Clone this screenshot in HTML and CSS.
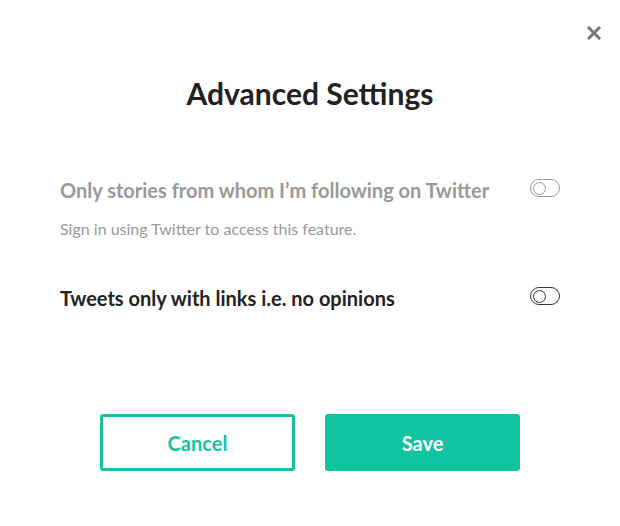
FILE: index.html
```html
<!DOCTYPE html>
<html lang="en">
<head>
  <meta charset="UTF-8">
  <meta name="viewport" content="width=device-width, initial-scale=1.0">
  <title>Advanced Settings</title>
  <link rel="stylesheet" href="styles.css">
</head>
<body>

  <div class="modal">
    <button class="close-btn" aria-label="Close">
      <svg width="14" height="14" viewBox="0 0 14 14">
        <path d="M2 2 L12 12 M12 2 L2 12" stroke="#777" stroke-width="3" stroke-linecap="square"/>
      </svg>
    </button>

    <h1>Advanced Settings</h1>

    <!-- Setting rows -->
    <div class="setting disabled">
      <div class="setting-text">
        <div class="setting-title">Only stories from whom I’m following on Twitter</div>
        <div class="setting-note">Sign in using Twitter to access this feature.</div>
      </div>
      <span class="toggle"><span class="knob"></span></span>
    </div>

    <div class="setting">
      <div class="setting-text">
        <div class="setting-title">Tweets only with links i.e. no opinions</div>
      </div>
      <span class="toggle"><span class="knob"></span></span>
    </div>

    <!-- Actions -->
    <div class="actions">
      <button class="btn btn-outline">Cancel</button>
      <button class="btn btn-primary">Save</button>
    </div>
  </div>

</body>
</html>
```

FILE: styles.css
```css
body {
  font-family: Lato, "Open Sans", sans-serif;
  background-color: white;
  margin: 0;
}

.modal {
  position: relative;
  width: 620px;
  height: 526px;
  box-sizing: border-box;
  padding: 75px 60px 0 60px;
}

.close-btn {
  position: absolute;
  top: 26px;
  right: 19px;
  background: none;
  border: none;
  padding: 0;
  cursor: pointer;
  line-height: 0;
}

h1 {
  margin: 0 0 67px 0;
  font-size: 30px;
  font-weight: 700;
  color: #222;
  text-align: center;
  line-height: 36px;
}

.setting {
  display: flex;
  justify-content: space-between;
  align-items: flex-start;
  margin-bottom: 48px;
}

.setting-title {
  font-size: 20px;
  font-weight: 700;
  color: #222;
  line-height: 24px;
}

.setting-note {
  margin-top: 17px;
  font-size: 16px;
  color: #999;
  line-height: 19px;
}

.disabled .setting-title {
  color: #999;
}

.toggle {
  display: flex;
  align-items: center;
  width: 24px;
  height: 16px;
  border: 1px solid #333;
  border-radius: 9px;
  margin-top: 1px;
  padding: 0 2px;
}

.knob {
  width: 11px;
  height: 11px;
  border: 1px solid #333;
  border-radius: 50%;
}

.disabled .toggle,
.disabled .knob {
  border-color: #999;
}

.actions {
  display: flex;
  justify-content: center;
  gap: 30px;
  margin-top: 104px;
}

.btn {
  width: 195px;
  height: 57px;
  border-radius: 3px;
  font-family: Lato, "Open Sans", sans-serif;
  font-size: 20px;
  font-weight: 700;
  cursor: pointer;
}

.btn-outline {
  background-color: white;
  color: #12c49f;
  border: 3px solid #12c49f;
}

.btn-primary {
  background-color: #10c49f;
  color: white;
  border: none;
}
```
